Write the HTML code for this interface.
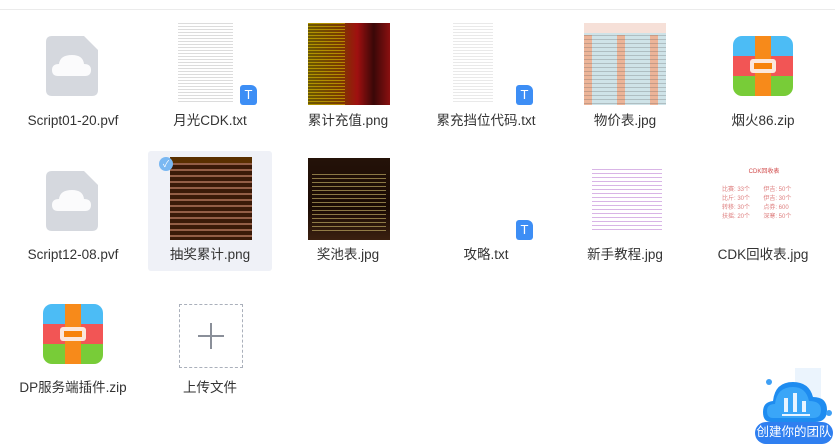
<!DOCTYPE html>
<html><head><meta charset="utf-8"><style>
*{margin:0;padding:0;box-sizing:border-box}
body{width:835px;height:435px;background:#fff;position:relative;overflow:hidden;font-family:"Liberation Sans","Noto Sans CJK SC",sans-serif;color:#333}
.line{position:absolute;left:0;top:9px;width:835px;height:1px;background:#ebebeb}
.lbl{position:absolute;width:138px;text-align:center;font-size:13.5px;line-height:16px;color:#333;white-space:nowrap}
.a{position:absolute}
.txtp{background:#fff;background-image:repeating-linear-gradient(180deg,#dcdcdc 0 1px,#fff 1px 3px);}
.badge{position:absolute;width:17px;height:20px;background:#3d8ef5;border-radius:3px;border-top-right-radius:6px;color:#fff;font-size:13px;text-align:center;line-height:20px}
</style></head><body>
<div class="line"></div>

<svg class="a" style="left:46px;top:36px" width="52" height="60" viewBox="0 0 52 60"><path d="M6 0H38L52 14V54Q52 60 46 60H6Q0 60 0 54V6Q0 0 6 0Z" fill="#d5d8de"/><path d="M12 40Q6 40 6 34Q6 28 13 28Q14 19 26 19Q37 19 38 28Q45 28 45 34Q45 40 39 40Z" fill="#fbfbfc"/></svg>
<div class="lbl" style="left:4px;top:113px">Script01-20.pvf</div>

<div class="a txtp" style="left:178px;top:23px;width:55px;height:80px"></div>
<div class="badge" style="left:240px;top:85px">T</div>
<div class="lbl" style="left:141px;top:113px">月光CDK.txt</div>

<div class="a" style="left:308px;top:23px;width:82px;height:82px;background:linear-gradient(90deg,#6b5800 0%,#7a3a00 40%,#a01010 60%,#3a0808 80%,#8a1010 100%)"><div style="position:absolute;inset:0;background:repeating-linear-gradient(180deg,rgba(230,200,0,.55) 0 1px,transparent 1px 3px);width:45%"></div></div>
<div class="lbl" style="left:279px;top:113px">累计充值.png</div>

<div class="a txtp" style="left:453px;top:23px;width:40px;height:80px;opacity:.6"></div>
<div class="badge" style="left:516px;top:85px">T</div>
<div class="lbl" style="left:417px;top:113px">累充挡位代码.txt</div>

<div class="a" style="left:584px;top:23px;width:82px;height:82px;background:#cfe3e8"><div style="height:10px;background:#f6e0d8"></div><div style="position:absolute;top:12px;left:0;right:0;bottom:0;background:repeating-linear-gradient(90deg,#f0b090 0 8px,#cfe3e8 8px 33px),#cfe3e8;opacity:.9"></div><div style="position:absolute;top:12px;left:0;right:0;bottom:0;background:repeating-linear-gradient(180deg,rgba(80,80,80,.25) 0 1px,transparent 1px 4px)"></div></div>
<div class="lbl" style="left:556px;top:113px">物价表.jpg</div>

<svg class="a" style="left:733px;top:36px" width="60" height="60" viewBox="0 0 60 60"><defs><clipPath id="c"><rect width="60" height="60" rx="9"/></clipPath></defs><g clip-path="url(#c)"><rect width="60" height="20" fill="#4cbcf5"/><rect y="20" width="60" height="20" fill="#f25555"/><rect y="40" width="60" height="20" fill="#78cc38"/><rect x="22" width="16" height="60" fill="#f78a1a"/><rect x="17" y="23" width="26" height="14" rx="3" fill="#fbe7dc"/><rect x="21" y="27" width="18" height="6" fill="#f7820a"/></g></svg>
<div class="lbl" style="left:694px;top:113px">烟火86.zip</div>

<svg class="a" style="left:46px;top:171px" width="52" height="60" viewBox="0 0 52 60"><path d="M6 0H38L52 14V54Q52 60 46 60H6Q0 60 0 54V6Q0 0 6 0Z" fill="#d5d8de"/><path d="M12 40Q6 40 6 34Q6 28 13 28Q14 19 26 19Q37 19 38 28Q45 28 45 34Q45 40 39 40Z" fill="#fbfbfc"/></svg>
<div class="lbl" style="left:4px;top:247px">Script12-08.pvf</div>

<div class="a" style="left:148px;top:151px;width:124px;height:120px;background:#eff1f7;border-radius:3px"></div>
<div class="a" style="left:170px;top:157px;width:82px;height:83px;background:#3a1a08"><div style="position:absolute;inset:0;background:repeating-linear-gradient(180deg,rgba(220,150,120,.55) 0 2px,transparent 2px 6px)"></div><div style="height:6px;background:#5a3000;position:relative"></div></div>
<div class="a" style="left:159px;top:157px;width:14px;height:14px;border-radius:50%;background:#7ab8f2;color:#fff;font-size:9px;text-align:center;line-height:14px">✓</div>
<div class="lbl" style="left:141px;top:247px">抽奖累计.png</div>

<div class="a" style="left:308px;top:158px;width:82px;height:82px;background:linear-gradient(180deg,#241208,#1a0a04 60%,#3a2010)"><div style="position:absolute;top:16px;left:4px;right:4px;bottom:6px;background:repeating-linear-gradient(180deg,rgba(210,190,110,.6) 0 1px,transparent 1px 4px)"></div></div>
<div class="lbl" style="left:279px;top:247px">奖池表.jpg</div>

<div class="badge" style="left:516px;top:220px">T</div>
<div class="lbl" style="left:417px;top:247px">攻略.txt</div>

<div class="a" style="left:588px;top:157px;width:78px;height:83px;background:#fff"><div style="position:absolute;top:12px;left:4px;right:4px;bottom:8px;background:repeating-linear-gradient(180deg,rgba(170,90,200,.45) 0 1px,transparent 1px 4px)"></div></div>
<div class="lbl" style="left:556px;top:247px">新手教程.jpg</div>

<div class="a" style="left:722px;top:168px;width:84px;height:60px;font-size:6px;color:#d04848;line-height:9px"><div style="text-align:center;margin-bottom:9px">CDK回收表</div><div style="opacity:.7">比赛: 33个 &nbsp;&nbsp;&nbsp;&nbsp;&nbsp;&nbsp; 伊吉: 50个<br>比斤: 30个 &nbsp;&nbsp;&nbsp;&nbsp;&nbsp;&nbsp; 伊吉: 30个<br>转移: 30个 &nbsp;&nbsp;&nbsp;&nbsp;&nbsp;&nbsp; 点券: 600<br>扶摇: 20个 &nbsp;&nbsp;&nbsp;&nbsp;&nbsp;&nbsp; 深寒: 50个</div></div>
<div class="lbl" style="left:694px;top:247px">CDK回收表.jpg</div>

<svg class="a" style="left:43px;top:304px" width="60" height="60" viewBox="0 0 60 60"><defs><clipPath id="c2"><rect width="60" height="60" rx="9"/></clipPath></defs><g clip-path="url(#c2)"><rect width="60" height="20" fill="#4cbcf5"/><rect y="20" width="60" height="20" fill="#f25555"/><rect y="40" width="60" height="20" fill="#78cc38"/><rect x="22" width="16" height="60" fill="#f78a1a"/><rect x="17" y="23" width="26" height="14" rx="3" fill="#fbe7dc"/><rect x="21" y="27" width="18" height="6" fill="#f7820a"/></g></svg>
<div class="lbl" style="left:4px;top:380px">DP服务端插件.zip</div>

<div class="a" style="left:179px;top:304px;width:64px;height:64px;border:1px dashed #aab0bb"></div>
<div class="a" style="left:198px;top:335px;width:26px;height:1.5px;background:#8a8f99"></div>
<div class="a" style="left:210px;top:323px;width:1.5px;height:26px;background:#8a8f99"></div>
<div class="lbl" style="left:141px;top:380px">上传文件</div>

<svg class="a" style="left:755px;top:368px" width="80" height="58" viewBox="0 0 80 58"><circle cx="14" cy="14" r="3" fill="#3fa0f5"/><rect x="40" y="0" width="26" height="40" fill="#e6f1fc" opacity=".8"/><path d="M16 54Q8 54 8 44Q8 34 18 33Q20 14 38 14Q54 14 58 29Q72 29 72 42Q72 54 60 54Z" fill="#1e8cf0"/><path d="M18 50Q12 50 12 43Q12 36 20 36Q22 19 38 19Q51 19 54 33Q66 33 66 42Q66 50 58 50Z" fill="#3aa6f8"/><rect x="29" y="30" width="4" height="14" fill="#e8f4ff"/><rect x="38" y="25" width="4" height="19" fill="#e8f4ff"/><rect x="47" y="33" width="4" height="11" fill="#e8f4ff"/><rect x="27" y="46" width="28" height="2" fill="#e8f4ff"/><circle cx="74" cy="45" r="3" fill="#3fa0f5"/></svg>
<div class="a" style="left:755px;top:422px;width:78px;height:22px;border-radius:11px;background:#2f7ff0;color:#fff;font-size:12.5px;line-height:20px;text-align:center">创建你的团队</div>
</body></html>
